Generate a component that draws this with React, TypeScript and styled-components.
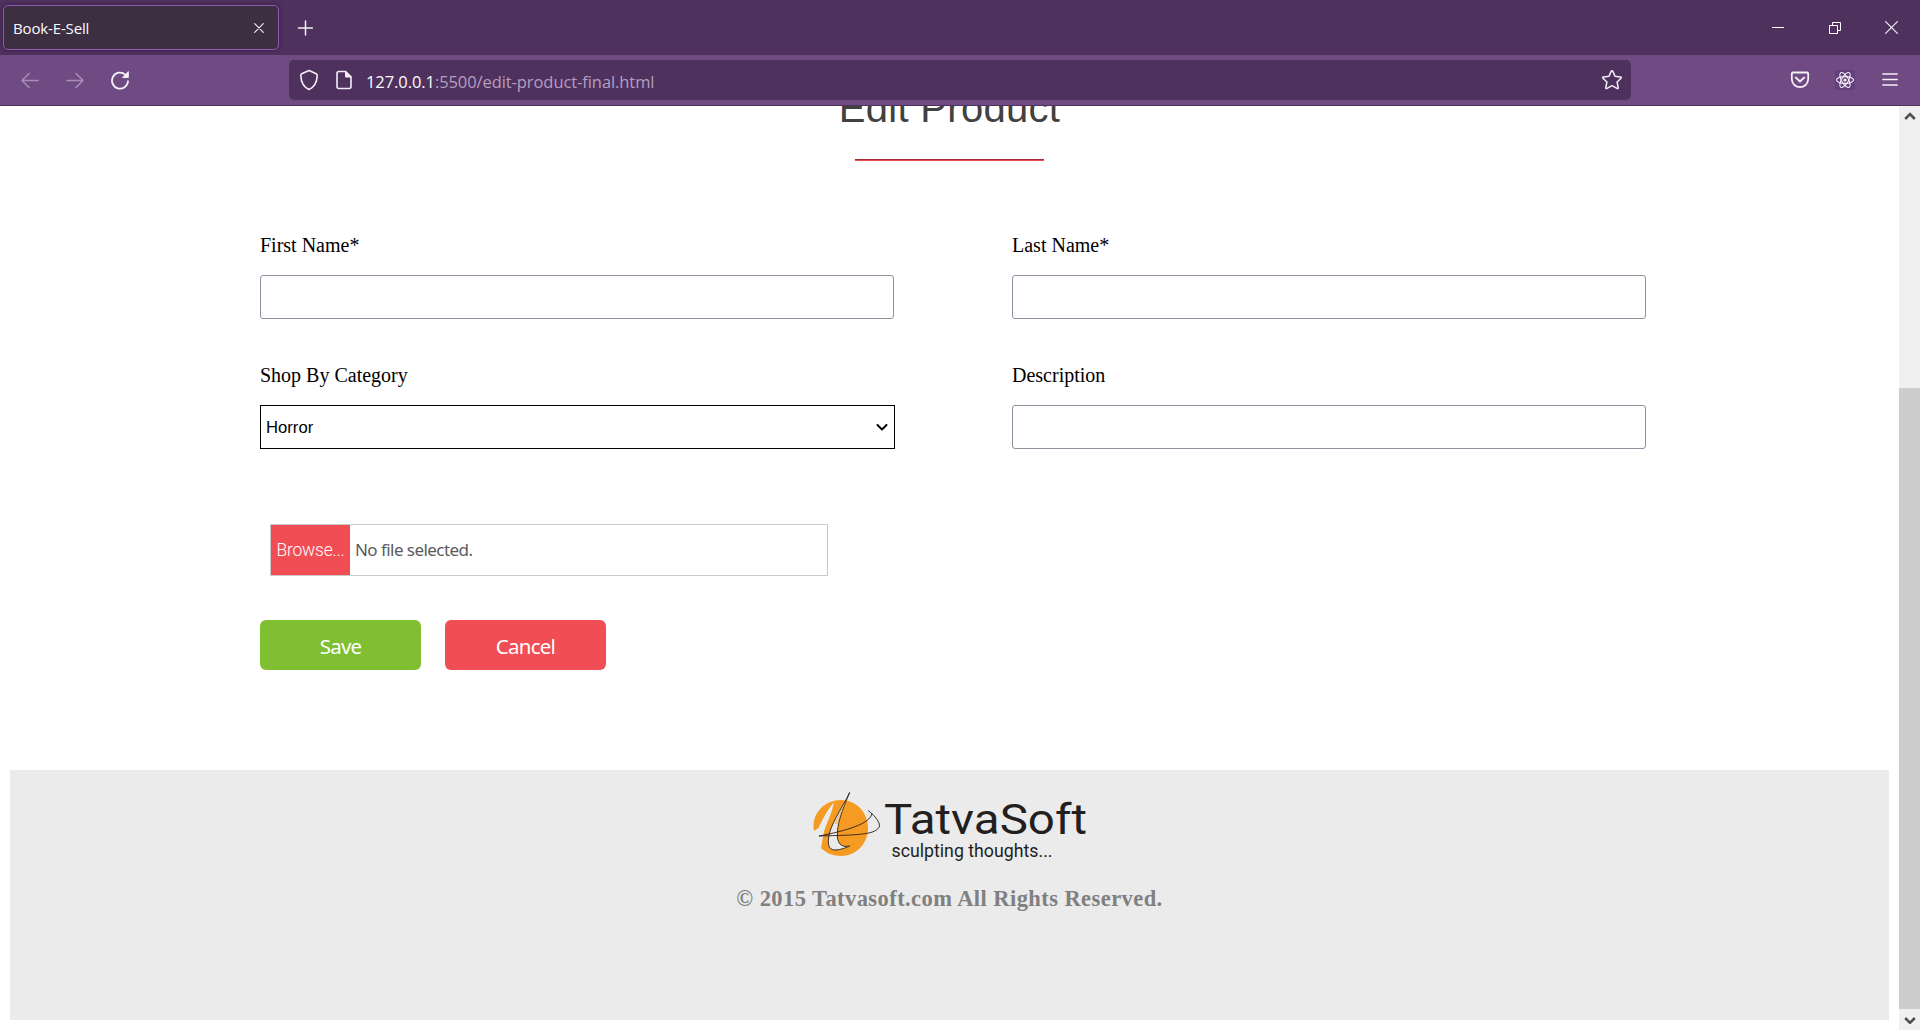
import React from "react";
import styled, { createGlobalStyle } from "styled-components";

const GlobalStyle = createGlobalStyle`
  *, *::before, *::after { box-sizing: border-box; }
  html, body { margin: 0; padding: 0; background: #fff; overflow: hidden; }
  button, input { font: inherit; margin: 0; }
`;

const ui = `"Open Sans", "Noto Sans", sans-serif`;

const Window = styled.div`
  display: flex;
  flex-direction: column;
  width: 1920px;
  height: 1030px;
  overflow: hidden;
`;

const TabStrip = styled.header`
  display: flex;
  align-items: center;
  flex: none;
  height: 55px;
  padding-left: 3px;
  background: #4f315e;
`;

const Tab = styled.div`
  display: flex;
  align-items: center;
  justify-content: space-between;
  width: 276px;
  height: 45px;
  padding: 0 9px 0 9px;
  border: 1px solid #9059b0;
  border-radius: 5px;
  background: #3d2f42;
  box-shadow: 0 0 5px rgba(20, 5, 30, 0.45);
`;

const TabTitle = styled.span`
  padding-top: 1px;
  font: 15px/20px ${ui};
  letter-spacing: -0.15px;
  color: #fbfbfe;
`;

const Cell = styled.span<{ $w?: number; $dim?: boolean }>`
  display: inline-flex;
  flex: none;
  align-items: center;
  justify-content: center;
  width: ${(p) => p.$w ?? 30}px;
  height: 30px;
  color: #f4eff7;
  opacity: ${(p) => (p.$dim ? 0.42 : 1)};
`;

const NewTab = styled(Cell)`
  margin-left: 11px;
`;

const WindowControls = styled.div`
  display: flex;
  margin-left: auto;
`;

const NavBar = styled.nav`
  display: flex;
  align-items: center;
  flex: none;
  height: 51px;
  padding-left: 15px;
  background: #704a83;
  border-bottom: 1px solid #4f315e;
`;

const NavButtons = styled.div`
  display: flex;
  gap: 15px;
`;

const AddressBar = styled.div`
  display: flex;
  align-items: center;
  gap: 11px;
  width: 1342px;
  height: 40px;
  margin: 0 154px;
  padding: 0 7px 0 8px;
  border-radius: 5px;
  background: #4f315e;
`;

const Url = styled.span`
  flex: 1;
  margin-left: -1px;
  padding-top: 3px;
  font: 16.5px/22px ${ui};
  letter-spacing: -0.08px;
  color: #b39fc0;
  b {
    font-weight: 400;
    color: #fbfbfe;
  }
`;

const Viewport = styled.div`
  display: flex;
  flex: 1;
  min-height: 0;
`;

const Page = styled.main`
  display: flex;
  flex-direction: column;
  width: 1899px;
  overflow: hidden;
  padding: 0 10px;
  background: #fff;
`;

const Title = styled.h1`
  flex: none;
  margin: -21px 0 0;
  font: 400 40px/46px "Liberation Sans", Arial, sans-serif;
  letter-spacing: 0.3px;
  color: #414141;
  text-align: center;
`;

const Rule = styled.div`
  flex: none;
  align-self: center;
  width: 189px;
  height: 2px;
  margin-top: 28px;
  border-top: 1px solid #a42b33;
  background: #f14d54;
`;

const Form = styled.form`
  display: flex;
  flex-direction: column;
  flex: none;
  height: 609px;
  padding: 72px 0 0 250px;
`;

const Fields = styled.div`
  display: grid;
  grid-template-columns: 635px 635px;
  column-gap: 117px;
  row-gap: 44px;
`;

const Field = styled.label`
  display: flex;
  flex-direction: column;
  gap: 18px;
  font: 20px/24px "Liberation Serif", "Times New Roman", serif;
  color: #000;
`;

const TextBox = styled.input`
  width: 634px;
  height: 44px;
  padding: 0 5px;
  border: 1px solid #8f8f9d;
  border-radius: 3px;
  outline: none;
  background: #fff;
`;

const SelectBox = styled.span`
  display: flex;
  align-items: center;
  justify-content: space-between;
  width: 635px;
  height: 44px;
  padding: 2px 6px 0 5px;
  border: 1px solid #000;
  font: 16.67px/20px "Liberation Sans", Arial, sans-serif;
`;

const FilePicker = styled.div`
  display: flex;
  width: 558px;
  height: 52px;
  margin: 75px 0 0 10px;
  border: 1px solid #c9c9c9;
`;

const Browse = styled.button`
  width: 79px;
  padding: 0;
  border: 0;
  background: #f14d54;
  font: 300 17.5px/20px Roboto, sans-serif;
  letter-spacing: -0.2px;
  color: #fff;
  white-space: nowrap;
`;

const FileName = styled.span`
  padding: 15px 0 0 5px;
  font: 17px/20px "Noto Sans", sans-serif;
  letter-spacing: -0.55px;
  color: #5a5a5a;
`;

const Actions = styled.div`
  display: flex;
  gap: 24px;
  margin-top: 44px;
`;

const Action = styled.button<{ $color: string }>`
  width: 161px;
  height: 50px;
  padding: 2px 0 0;
  border: 0;
  border-radius: 6px;
  background: ${(p) => p.$color};
  font: 20.5px/24px "Noto Sans", sans-serif;
  letter-spacing: -0.75px;
  color: #fff;
`;

const Footer = styled.footer`
  display: flex;
  flex-direction: column;
  align-items: center;
  flex: none;
  height: 250px;
  padding-top: 17px;
  background: #ebebeb;
`;

const Copyright = styled.p`
  margin: 19px 0 0;
  font: 700 22.5px/26px "Liberation Serif", "Times New Roman", serif;
  letter-spacing: 0.43px;
  color: #808080;
`;

const ScrollTrack = styled.div`
  display: flex;
  flex-direction: column;
  width: 21px;
  background: #f0f0f0;
`;

const ScrollArrow = styled.span`
  display: flex;
  align-items: center;
  justify-content: center;
  height: 21px;
  padding-bottom: 1px;
  color: #505050;
`;

const ScrollThumb = styled.div`
  flex: none;
  height: 621px;
  margin-top: 261px;
  background: #cdcdcd;
`;

const ExtensionBadge = styled.span`
  display: flex;
  width: 20px;
  height: 20px;
  border-radius: 2px;
  background: #62407a;
`;

const ToolCell = styled(Cell)`
  margin-left: 15px;
`;

type IconProps = { w: number; h: number; sw?: number; children: React.ReactNode };

const Icon = ({ w, h, sw = 1.5, children }: IconProps) => (
  <svg
    width={w}
    height={h}
    viewBox={`0 0 ${w} ${h}`}
    fill="none"
    stroke="currentColor"
    strokeWidth={sw}
    strokeLinecap="round"
    strokeLinejoin="round"
  >
    {children}
  </svg>
);

const Logo = () => (
  <svg width="276" height="80" viewBox="812 787 276 80" fill="none">
    <path
      d="M814 831C811 814 824 800 841 800C856 800 868 812 868 828C868 844 856 856 841 856C833 856 826 853 821 848C821 840 823 832 825 824L834 802C828 810 821 826 818 830Z"
      fill="#f59a22"
    />
    <path d="M814 831L818.500 828C823 818 828 809 833.500 803C832.500 813 826 824 824 832L821 848L816 840Z" fill="#ebebeb" />
    <path
      d="M849.600 792.500C845 803 833 820 829.500 833C827 844 828.500 850 835 850C841 850 846 847.500 849.500 846C843 847.500 838.500 845 837.500 838C836.500 824 842 811 849.600 792.500Z"
      fill="#ebebeb"
      stroke="#2a211c"
      strokeWidth="0.9"
    />
    <path d="M849 794C845 803 838 815 834.500 824L838.500 824C840 814 845 803 849 794Z" fill="#f59a22" fillOpacity="0.45" />
    <path
      d="M868 810.500C874 815 879.500 821 879.500 826C877 835 857 835 819 836C845 831 871 824 872 813"
      stroke="#2a211c"
      strokeWidth="0.9"
    />
    <text
      x="884"
      y="833.500"
      textLength="203"
      lengthAdjust="spacingAndGlyphs"
      fontFamily="Roboto, sans-serif"
      fontSize="43"
      fill="#231f20"
    >
      TatvaSoft
    </text>
    <text
      x="891.500"
      y="856.500"
      textLength="161"
      lengthAdjust="spacingAndGlyphs"
      fontFamily="Roboto, sans-serif"
      fontSize="18"
      fill="#231f20"
    >
      sculpting thoughts...
    </text>
  </svg>
);

export default function App() {
  return (
    <Window>
      <GlobalStyle />
      <TabStrip>
        <Tab>
          <TabTitle>Book-E-Sell</TabTitle>
          <Cell $w={20}>
            <Icon w={10} h={10} sw={1.1}>
              <path d="M.7.7l8.600 8.600M9.300.7L.7 9.300" />
            </Icon>
          </Cell>
        </Tab>
        <NewTab>
          <Icon w={16} h={16}>
            <path d="M8.500 1v14M1.500 8h14" />
          </Icon>
        </NewTab>
        <WindowControls>
          <Cell $w={57}>
            <svg width="12" height="12">
              <path d="M0 5.500h12" stroke="#fff" shapeRendering="crispEdges" />
            </svg>
          </Cell>
          <Cell $w={57}>
            <svg width="12" height="12" fill="none" stroke="#fff">
              <path d="M.5 3.500h8v8h-8zM3.500 3.500v-3h8v8h-3" />
            </svg>
          </Cell>
          <Cell $w={57}>
            <Icon w={13} h={13} sw={1.2}>
              <path d="M.6.6l11.800 11.800M12.400.6L.6 12.400" />
            </Icon>
          </Cell>
        </WindowControls>
      </TabStrip>

      <NavBar>
        <NavButtons>
          <Cell $dim>
            <Icon w={18} h={16}>
              <path d="M17.200 8.500H1M8 1.500L1 8.500l7 7" />
            </Icon>
          </Cell>
          <Cell $dim>
            <Icon w={18} h={16}>
              <path d="M.8 8.500H17M10 1.500l7 7-7 7" />
            </Icon>
          </Cell>
          <Cell>
            <Icon w={20} h={20} sw={1.8}>
              <path d="M18 11.200A8 8 0 1 1 15.300 4.600" />
              <path d="M18.300 2v5.400h-5.400z" fill="currentColor" strokeWidth="1" />
            </Icon>
          </Cell>
        </NavButtons>
        <AddressBar>
          <Cell $w={24}>
            <Icon w={20} h={22} sw={1.6}>
              <path d="M10 1.500L17.200 4.800Q18.300 5.300 18.200 6.500C18 13 15.500 18 10 20.500C4.500 18 2 13 1.800 6.500Q1.700 5.300 2.800 4.800Z" />
            </Icon>
          </Cell>
          <Cell $w={24}>
            <Icon w={18} h={20} sw={1.6}>
              <path d="M10.500 1.500H4Q2 1.500 2 3.500v13q0 2 2 2h10q2 0 2-2V7z" />
              <path d="M10.500 1.500V7H16z" fill="currentColor" strokeWidth="1" />
            </Icon>
          </Cell>
          <Url>
            <b>127.0.0.1</b>:5500/edit-product-final.html
          </Url>
          <Cell $w={24}>
            <Icon w={22} h={22} sw={1.5}>
              <path d="M11 1.700q.6 0 .9.700l2.100 4.900 5.400.6q1.600.3.600 1.400l-3.900 3.700 1.100 5.500q.2 1.600-1.200.9L11 16.700l-5 2.700q-1.400.7-1.200-.9l1.100-5.500L2 9.300q-1-1.100.6-1.400L8 7.300l2.100-4.900q.3-.7.9-.7z" />
            </Icon>
          </Cell>
        </AddressBar>
        <Cell>
          <Icon w={20} h={18} sw={1.8}>
            <path d="M3 1.500h14q1.200 0 1.200 1.300V8a8.200 8.200 0 0 1-16.400 0V2.800Q1.800 1.500 3 1.500z" />
            <path d="M5.800 6.500L10 10.500l4.200-4" />
          </Icon>
        </Cell>
        <ToolCell>
          <ExtensionBadge>
            <Icon w={20} h={20} sw={1.1}>
              {[0, 60, 120].map((a) => (
                <ellipse key={a} cx="10" cy="10" rx="8.500" ry="3.400" transform={`rotate(${a} 10 10)`} />
              ))}
              <circle cx="10" cy="10" r="1.600" fill="currentColor" stroke="none" />
            </Icon>
          </ExtensionBadge>
        </ToolCell>
        <ToolCell>
          <Icon w={16} h={14} sw={1.4}>
            <path d="M.8 1h14.400M.8 6.500h14.400M.8 12h14.400" />
          </Icon>
        </ToolCell>
      </NavBar>

      <Viewport>
        <Page>
          <Title>Edit Product</Title>
          <Rule />
          <Form onSubmit={(e) => e.preventDefault()}>
            <Fields>
              <Field>
                First Name*
                <TextBox />
              </Field>
              <Field>
                Last Name*
                <TextBox />
              </Field>
              <Field as="div">
                Shop By Category
                <SelectBox>
                  Horror
                  <Icon w={12} h={8} sw={1.9}>
                    <path d="M1.500 1L6 5.500 10.500 1" />
                  </Icon>
                </SelectBox>
              </Field>
              <Field>
                Description
                <TextBox />
              </Field>
            </Fields>
            <FilePicker>
              <Browse type="button">Browse...</Browse>
              <FileName>No file selected.</FileName>
            </FilePicker>
            <Actions>
              <Action $color="#80bf32">Save</Action>
              <Action $color="#f14d54" type="button">
                Cancel
              </Action>
            </Actions>
          </Form>
          <Footer>
            <Logo />
            <Copyright>© 2015 Tatvasoft.com All Rights Reserved.</Copyright>
          </Footer>
        </Page>
        <ScrollTrack>
          <ScrollArrow>
            <Icon w={12} h={9} sw={2.6}>
              <path d="M1.200 7L6 2.200 10.800 7" strokeLinecap="butt" strokeLinejoin="miter" />
            </Icon>
          </ScrollArrow>
          <ScrollThumb />
          <ScrollArrow>
            <Icon w={12} h={9} sw={2.6}>
              <path d="M1.200 3L6 7.800 10.800 3" strokeLinecap="butt" strokeLinejoin="miter" />
            </Icon>
          </ScrollArrow>
        </ScrollTrack>
      </Viewport>
    </Window>
  );
}
